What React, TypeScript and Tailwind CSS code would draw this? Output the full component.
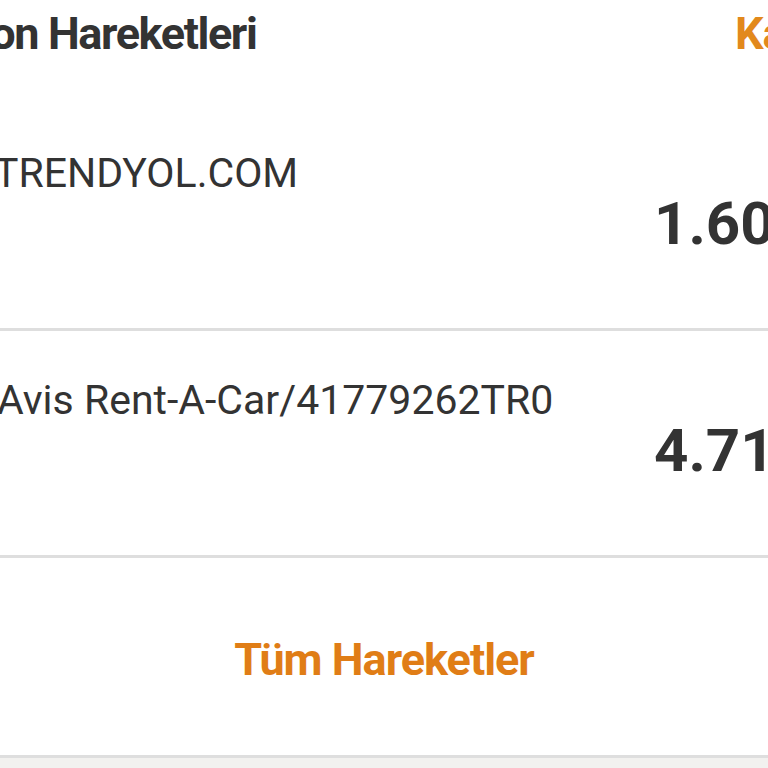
export default function App() {
  const rows = [
    { name: "TRENDYOL.COM", shift: "-ml-[6px]", amount: "1.600,00 TL" },
    { name: "Avis Rent-A-Car/41779262TR0", shift: "-ml-[3px]", amount: "4.715,00 TL" },
  ];

  return (
    <div className="w-[768px] h-[768px] overflow-hidden bg-[#f2f1ef] font-['Roboto',sans-serif] text-[#333333]">
      <div className="bg-white">
        {/* header */}
        <div className="grid grid-cols-[735px_auto] h-[104px] pt-[6px] whitespace-nowrap">
          <span className="-ml-[36px] text-[45px] font-bold leading-[56px] tracking-[-1.4px]">Son Hareketleri</span>
          <span className="text-[45px] font-bold leading-[56px] tracking-[-1px] text-[#e2891c]">Kampanyalar</span>
        </div>

        {rows.map((r) => (
          <div key={r.name} className="flex flex-col h-[227px] border-b-[3px] border-[#dedede] whitespace-nowrap">
            <span className={`${r.shift} pt-[45px] text-[41px] leading-[48px]`}>{r.name}</span>
            <span className="pl-[654px] -mt-[1px] text-[60px] font-bold leading-[56px]">{r.amount}</span>
          </div>
        ))}

        {/* footer link */}
        <div className="flex h-[200px] items-center justify-center border-b-[3px] border-[#dedede] pt-[6px]">
          <span className="text-[45px] font-bold tracking-[-1px] text-[#e07d16]">Tüm Hareketler</span>
        </div>
      </div>
    </div>
  );
}
